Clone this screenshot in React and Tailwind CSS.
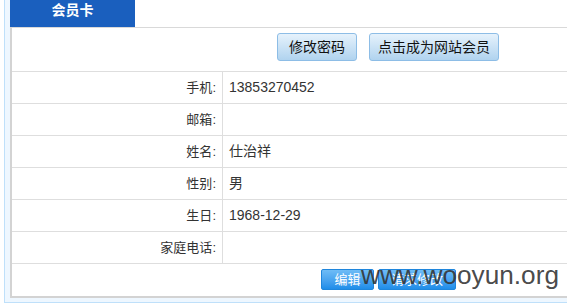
export default function App() {
  const rows = [
    ["手机", "13853270452"],
    ["邮箱", ""],
    ["姓名", "仕治祥"],
    ["性别", "男"],
    ["生日", "1968-12-29"],
    ["家庭电话", ""],
  ];
  const cjk = { fontFamily: '"Liberation Sans", "Noto Sans CJK SC", sans-serif' };
  return (
    <div className="relative w-[567px] h-[306px] bg-white overflow-hidden" style={cjk}>
      <div className="ml-[4px] h-[303px] border-l border-b border-[#bfe0fa] bg-[#eef7ff] pl-[5px] pb-[4px] flex flex-col">
        <div className="h-[27px] flex bg-white">
          <div className="w-[125px] h-[27px] bg-[#1a5fbe] text-white font-bold text-[14px] leading-[14px] flex justify-center pt-[3px]">
            会员卡
          </div>
          <div className="flex-1 bg-white" />
        </div>
        <div className="flex-1 bg-white border-t border-l-2 border-b-2 border-t-[#d9d9d9] border-l-[#d3d3d3] border-b-[#d3d3d3] flex flex-col">
          <div className="h-[44px] border-b border-[#dedede] flex pt-[5px] pl-[265px] gap-[12px]">
            <button className="h-[28px] w-[80px] rounded-[3px] border border-[#8dbde6] bg-gradient-to-b from-[#e6f2fc] to-[#b0d3ef] text-[14px] text-[#111] leading-none">
              修改密码
            </button>
            <button className="h-[28px] w-[130px] rounded-[3px] border border-[#8dbde6] bg-gradient-to-b from-[#e6f2fc] to-[#b0d3ef] text-[14px] text-[#111] leading-none">
              点击成为网站会员
            </button>
          </div>
          {rows.map(([k, v]) => (
            <div key={k} className="h-[32px] border-b border-[#dedede] flex">
              <div className="w-[211px] border-r border-[#dedede] flex items-center justify-end pr-[6px] text-[13px] text-[#333]">
                {k}:
              </div>
              <div className="flex-1 flex items-center pl-[6px] text-[14px] text-[#333]">{v}</div>
            </div>
          ))}
          <div className="flex-1 flex pt-[5px] pl-[309px] gap-[4px]">
            <button className="h-[21px] w-[53px] rounded-[2px] border border-[#1f86dc] bg-gradient-to-b from-[#6ebcf6] to-[#1d8de9] text-white text-[13px] leading-none">
              编辑
            </button>
            <button className="h-[21px] w-[78px] rounded-[2px] border border-[#1f86dc] bg-gradient-to-b from-[#6ebcf6] to-[#1d8de9] text-white text-[13px] leading-none">
              请求修改
            </button>
          </div>
        </div>
      </div>
      <div
        className="absolute left-[361px] top-[262px] text-[26.2px] leading-[26px] text-[#333]/90 whitespace-nowrap"
        style={{ fontFamily: '"Liberation Sans", sans-serif' }}
      >
        www.wooyun.org
      </div>
    </div>
  );
}
